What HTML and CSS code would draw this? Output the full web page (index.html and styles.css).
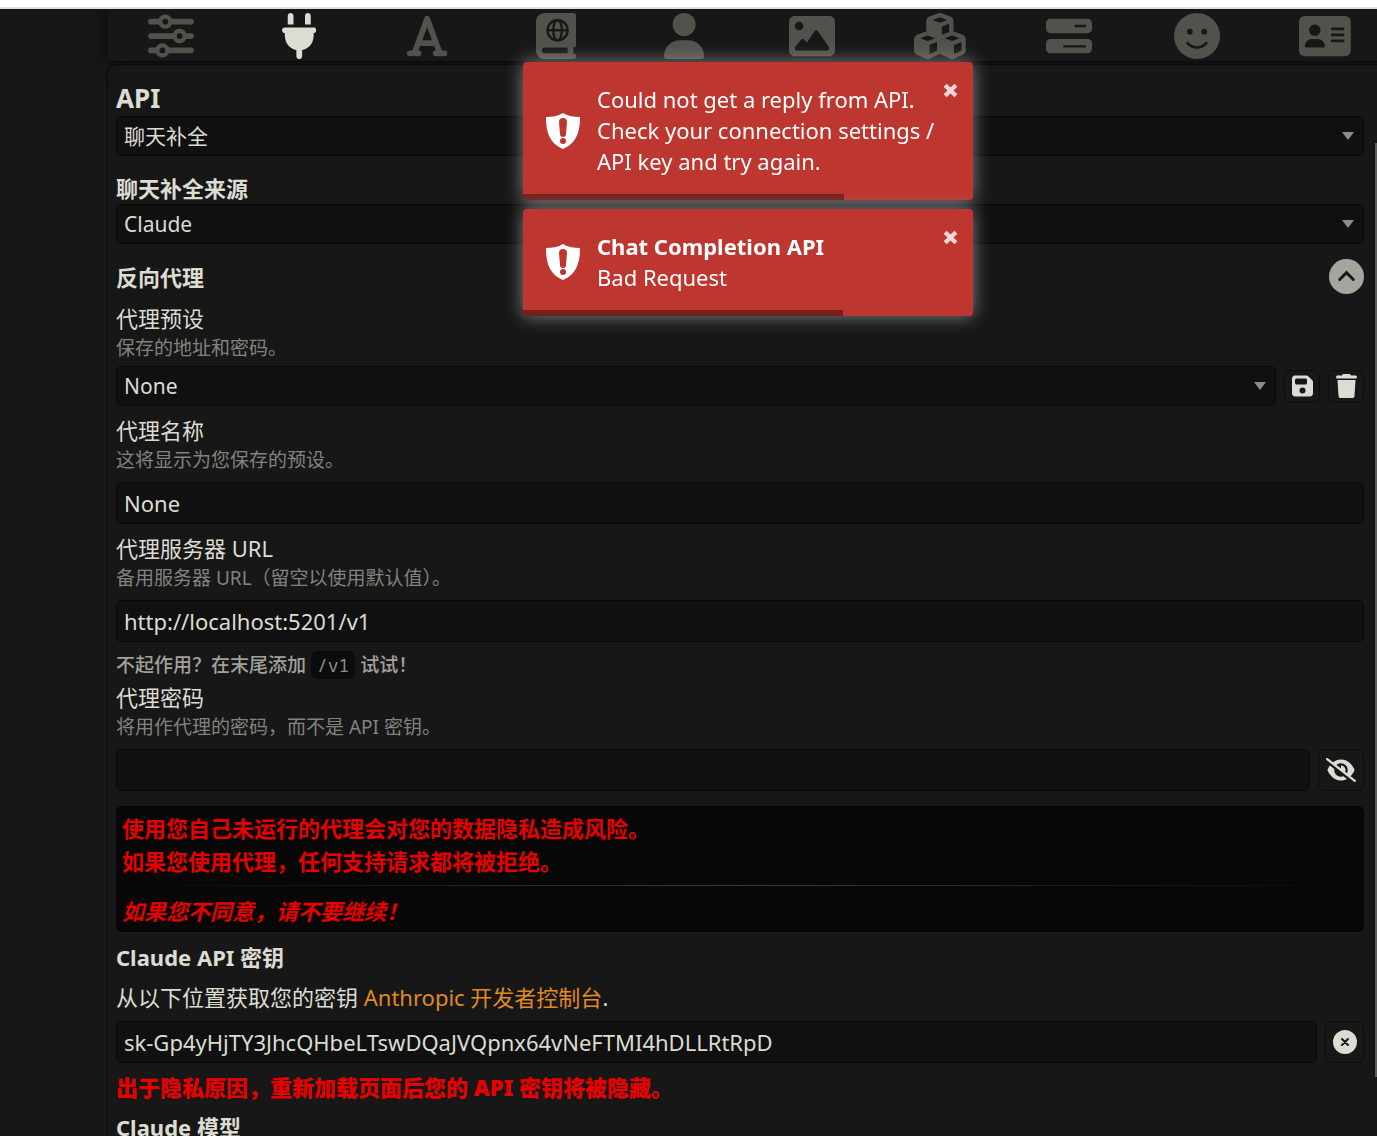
FILE: index.html
```html
<!DOCTYPE html>
<html lang="zh-CN">
<head>
    <meta charset="UTF-8">
    <title>API</title>
    <link rel="stylesheet" href="styles.css">
</head>
<body>
<div class="top-bar">
    <button class="drawer" type="button" aria-label="预设">
        <svg viewBox="0 0 512 512"><path d="M0 416c0 17.700 14.300 32 32 32l54.700 0c12.300 28.300 40.500 48 73.300 48s61-19.700 73.300-48L480 448c17.700 0 32-14.300 32-32s-14.300-32-32-32l-246.700 0c-12.300-28.300-40.500-48-73.300-48s-61 19.700-73.300 48L32 384c-17.700 0-32 14.300-32 32zm128 0a32 32 0 1 1 64 0 32 32 0 1 1 -64 0zM320 256a32 32 0 1 1 64 0 32 32 0 1 1 -64 0zm32-80c-32.800 0-61 19.700-73.300 48L32 224c-17.700 0-32 14.300-32 32s14.300 32 32 32l246.700 0c12.300 28.300 40.500 48 73.300 48s61-19.700 73.300-48l54.700 0c17.700 0 32-14.300 32-32s-14.300-32-32-32l-54.700 0c-12.300-28.300-40.500-48-73.300-48zM192 128a32 32 0 1 1 0-64 32 32 0 1 1 0 64zm73.300-64C253 35.700 224.800 16 192 16s-61 19.700-73.300 48L32 64C14.300 64 0 78.300 0 96s14.300 32 32 32l86.700 0c12.300 28.300 40.500 48 73.300 48s61-19.700 73.300-48L480 128c17.700 0 32-14.300 32-32s-14.300-32-32-32L265.300 64z"/></svg>
    </button>
    <button class="drawer current" type="button" aria-label="API 连接">
        <svg viewBox="0 0 384 512"><path d="M96 0C78.300 0 64 14.300 64 32l0 96 64 0 0-96c0-17.700-14.300-32-32-32zM288 0c-17.700 0-32 14.300-32 32l0 96 64 0 0-96c0-17.700-14.300-32-32-32zM32 160c-17.700 0-32 14.300-32 32s14.300 32 32 32l0 32c0 77.400 55 142 128 156.800l0 67.200c0 17.700 14.300 32 32 32s32-14.300 32-32l0-67.200C297 398 352 333.400 352 256l0-32c17.700 0 32-14.300 32-32s-14.300-32-32-32L32 160z"/></svg>
    </button>
    <button class="drawer" type="button" aria-label="格式">
        <svg viewBox="0 0 448 512"><g fill="none" stroke="currentColor" stroke-width="64" stroke-linecap="round" stroke-linejoin="round"><polyline points="86,440 224,64 362,440"/><line x1="140" y1="336" x2="308" y2="336"/><line x1="32" y1="448" x2="128" y2="448"/><line x1="320" y1="448" x2="416" y2="448"/></g></svg>
    </button>
    <button class="drawer" type="button" aria-label="世界书">
        <svg viewBox="0 0 448 512"><path d="M0 96C0 43 43 0 96 0L416 0c17.700 0 32 14.300 32 32l0 320c0 17.700-14.300 32-32 32l0 64c17.700 0 32 14.300 32 32s-14.300 32-32 32L96 512c-53 0-96-43-96-96L0 96zM64 416c0 17.700 14.300 32 32 32l256 0 0-64L96 384c-17.700 0-32 14.300-32 32z"/><g fill="none" stroke="#171717" stroke-width="26"><circle cx="240" cy="192" r="112"/><ellipse cx="240" cy="192" rx="48" ry="112"/><line x1="128" y1="192" x2="352" y2="192"/></g></svg>
    </button>
    <button class="drawer" type="button" aria-label="用户">
        <svg viewBox="0 0 448 512"><path d="M224 256A128 128 0 1 0 224 0a128 128 0 1 0 0 256zm-45.700 48C79.800 304 0 383.800 0 482.300C0 498.700 13.300 512 29.700 512l388.600 0c16.400 0 29.700-13.300 29.700-29.700C448 383.800 368.200 304 269.700 304l-91.400 0z"/></svg>
    </button>
    <button class="drawer" type="button" aria-label="背景">
        <svg viewBox="0 0 512 512"><path d="M0 96C0 60.700 28.700 32 64 32l384 0c35.300 0 64 28.700 64 64l0 320c0 35.300-28.700 64-64 64L64 480c-35.300 0-64-28.700-64-64L0 96zM323.800 202.500c-4.500-6.600-11.900-10.500-19.800-10.500s-15.400 3.900-19.800 10.500l-87 127.600L170.700 297c-4.600-5.700-11.500-9-18.700-9s-14.200 3.300-18.700 9l-64 80c-5.800 7.200-6.900 17.100-2.900 25.400s12.400 13.600 21.600 13.600l336 0c8.900 0 17.100-4.900 21.200-12.800s3.600-17.400-1.400-24.700l-120-176zM112 192a48 48 0 1 0 0-96 48 48 0 1 0 0 96z"/></svg>
    </button>
    <button class="drawer" type="button" aria-label="扩展">
        <svg viewBox="0 0 576 512"><path d="M290.800 48.600l78.400 29.700L288 109.500 206.800 78.300l78.400-29.700c1.800-.7 3.800-.7 5.700 0zM136 92.500l0 112.200c-1.300 .4-2.600 .8-3.900 1.300l-96 36.400C14.400 250.600 0 271.500 0 294.700L0 413.900c0 22.200 13.100 42.300 33.500 51.300l96 42.200c14.400 6.300 30.700 6.300 45.100 0L288 457.500l113.500 49.900c14.400 6.300 30.700 6.300 45.100 0l96-42.200c20.300-8.900 33.500-29.100 33.500-51.300l0-119.100c0-23.300-14.400-44.100-36.100-52.400l-96-36.400c-1.300-.5-2.600-.9-3.900-1.300l0-112.200c0-23.300-14.400-44.100-36.100-52.400l-96-36.400c-12.800-4.800-26.900-4.800-39.700 0l-96 36.400C150.400 48.400 136 69.300 136 92.500zM392 210.600l-82.400 31.200 0-89.200L392 121l0 89.600zM154.800 250.900l78.400 29.700L152 311.700 70.800 280.600l78.400-29.700c1.800-.7 3.800-.7 5.700 0zm18.800 204.400l0-100.500L256 323.200l0 95.900-82.400 36.200zM421.200 250.900c1.800-.7 3.800-.7 5.700 0l78.400 29.700L424 311.700l-81.200-31.100 78.400-29.700zM523.200 421.200l-77.600 34.100 0-100.500L528 323.200l0 90.700c0 3.200-1.900 6-4.800 7.300z"/></svg>
    </button>
    <button class="drawer" type="button" aria-label="服务器">
        <svg viewBox="0 0 512 512"><rect y="64" width="512" height="160" rx="50"/><rect y="288" width="512" height="160" rx="50"/><path fill="#171717" d="M320 132h124v26H320zM192 358h252v26H192z"/></svg>
    </button>
    <button class="drawer" type="button" aria-label="表情">
        <svg viewBox="0 0 512 512"><circle cx="256" cy="256" r="256"/><g fill="#171717"><circle cx="176" cy="208" r="32"/><circle cx="336" cy="208" r="32"/></g><path fill="none" stroke="#171717" stroke-width="30" stroke-linecap="round" d="M152 336C175 362 210 384 256 384s81-22 104-48"/></svg>
    </button>
    <button class="drawer" type="button" aria-label="角色管理">
        <svg viewBox="0 0 576 512"><rect y="32" width="576" height="448" rx="64"/><g fill="#171717"><circle cx="176" cy="192" r="64"/><path d="M64 368c0-44 36-80 80-80h64c44 0 80 36 80 80 0 9-7 16-16 16H80c-9 0-16-7-16-16z"/></g><path stroke="#171717" stroke-width="30" stroke-linecap="round" d="M368 176h124M368 243h124M368 310h124"/></svg>
    </button>
</div>

<div class="panel">
    <h3><label for="mainApi">API</label></h3>
    <select id="mainApi"><option>聊天补全</option></select>

    <h4><label for="source">聊天补全来源</label></h4>
    <select id="source"><option>Claude</option></select>

    <div class="drawer-head">
        <h4>反向代理</h4>
        <button class="toggle" type="button" aria-label="收起">
            <svg viewBox="0 0 36 36"><circle cx="18" cy="18" r="18"/><polyline points="11,21 18,14 25,21" fill="none" stroke="#171717" stroke-width="3" stroke-linecap="round"/></svg>
        </button>
    </div>

    <label class="name" for="preset">代理预设</label>
    <p class="hint">保存的地址和密码。</p>
    <div class="row">
        <select id="preset"><option>None</option></select>
        <button class="btn small" type="button" aria-label="保存">
            <svg viewBox="0 0 448 512"><path d="M64 32C28.700 32 0 60.700 0 96L0 416c0 35.300 28.700 64 64 64l320 0c35.300 0 64-28.700 64-64l0-242.700c0-17-6.700-33.300-18.700-45.300L352 50.700C340 38.700 323.700 32 306.700 32L64 32zm0 96c0-17.700 14.300-32 32-32l192 0c17.700 0 32 14.300 32 32l0 64c0 17.700-14.300 32-32 32L96 224c-17.700 0-32-14.300-32-32l0-64zM224 288a64 64 0 1 1 0 128 64 64 0 1 1 0-128z"/></svg>
        </button>
        <button class="btn small" type="button" aria-label="删除">
            <svg viewBox="0 0 448 512"><path d="M135.200 17.700L128 32 32 32C14.300 32 0 46.300 0 64S14.300 96 32 96l384 0c17.700 0 32-14.300 32-32s-14.300-32-32-32l-96 0-7.200-14.300C307.400 6.800 296.300 0 284.200 0L163.800 0c-12.100 0-23.200 6.800-28.600 17.700zM416 128L32 128 53.200 467c1.600 25.300 22.600 45 47.900 45l245.800 0c25.300 0 46.300-19.700 47.900-45L416 128z"/></svg>
        </button>
    </div>

    <label class="name" for="proxyName">代理名称</label>
    <p class="hint">这将显示为您保存的预设。</p>
    <input id="proxyName" type="text" value="None">

    <label class="name" for="proxyUrl">代理服务器 URL</label>
    <p class="hint">备用服务器 URL（留空以使用默认值）。</p>
    <input id="proxyUrl" type="text" value="http://localhost:5201/v1">
    <p class="note">不起作用？在末尾添加 <code>/v1</code> 试试！</p>

    <label class="name tight" for="proxyPass">代理密码</label>
    <p class="hint">将用作代理的密码，而不是 API 密钥。</p>
    <div class="row field">
        <input id="proxyPass" type="password">
        <button class="btn eye" type="button" aria-label="显示密码">
            <svg viewBox="0 0 640 512"><path d="M38.800 5.100C28.400-3.100 13.300-1.200 5.100 9.200S-1.200 34.700 9.200 42.900l592 464c10.400 8.200 25.500 6.300 33.700-4.100s6.300-25.500-4.100-33.700L525.600 386.700c39.600-40.600 66.400-86.100 79.900-118.400c3.300-7.900 3.300-16.700 0-24.600c-14.900-35.700-46.200-87.700-93-131.100C465.500 68.800 400.800 32 320 32c-68.200 0-125 26.300-169.300 60.800L38.800 5.100zM223.100 149.500C248.600 126.200 282.700 112 320 112c79.500 0 144 64.500 144 144c0 24.900-6.300 48.300-17.400 68.700L408 294.500c8.400-19.300 10.600-41.400 4.800-63.300c-11.100-41.500-47.800-69.400-88.600-71.100c-5.800-.2-9.200 6.100-7.400 11.700c2.100 6.400 3.300 13.200 3.300 20.300c0 10.200-2.400 19.800-6.600 28.300l-90.300-70.800zM373 389.900c-16.400 6.500-34.300 10.100-53 10.100c-79.500 0-144-64.500-144-144c0-6.900 .5-13.600 1.400-20.200L83.100 161.500C60.300 191.200 44 220.800 34.500 243.700c-3.300 7.900-3.300 16.700 0 24.600c14.900 35.700 46.200 87.700 93 131.100C174.500 443.200 239.200 480 320 480c47.800 0 89.900-12.900 126.200-32.500L373 389.900z"/></svg>
        </button>
    </div>

    <div class="warning">
        <p>使用您自己未运行的代理会对您的数据隐私造成风险。</p>
        <p>如果您使用代理，任何支持请求都将被拒绝。</p>
        <hr>
        <p><em>如果您不同意，请不要继续！</em></p>
    </div>

    <h4 class="key-title"><label for="apiKey">Claude API 密钥</label></h4>
    <p class="source">从以下位置获取您的密钥 <a href="#">Anthropic 开发者控制台</a>.</p>
    <div class="row field">
        <input id="apiKey" type="text" value="sk-Gp4yHjTY3JhcQHbeLTswDQaJVQpnx64vNeFTMI4hDLLRtRpD">
        <button class="btn clear" type="button" aria-label="清除">
            <svg viewBox="0 0 24 24"><circle cx="12" cy="12" r="12"/><path d="M9 9l6 6M15 9l-6 6" stroke="#171717" stroke-width="2" stroke-linecap="round"/></svg>
        </button>
    </div>
    <p class="privacy">出于隐私原因，重新加载页面后您的 API 密钥将被隐藏。</p>
    <h4 class="model">Claude 模型</h4>
</div>
<div class="scroll-thumb"></div>

<div class="toasts">
    <div class="toast" role="alert">
        <svg class="shield" viewBox="0 0 34 36"><path d="M17 0C12 3 6 4 0 4c0 14 3 26 17 32C31 30 34 18 34 4 28 4 22 3 17 0z"/><path fill="#bd362f" d="M17 5c3 0 4 2 4 4l-1 12c0 2-1 3-3 3s-3-1-3-3L13 9c0-2 1-4 4-4z"/><circle cx="17" cy="28" r="3" fill="#bd362f"/></svg>
        <div class="message">Could not get a reply from API. Check your connection settings / API key and try again.</div>
        <button class="close" type="button" aria-label="关闭"><svg viewBox="0 0 14 14"><path d="M2 2l10 10M12 2L2 12"/></svg></button>
        <div class="progress" style="width: 71.400%"></div>
    </div>
    <div class="toast" role="alert">
        <svg class="shield" viewBox="0 0 34 36"><path d="M17 0C12 3 6 4 0 4c0 14 3 26 17 32C31 30 34 18 34 4 28 4 22 3 17 0z"/><path fill="#bd362f" d="M17 5c3 0 4 2 4 4l-1 12c0 2-1 3-3 3s-3-1-3-3L13 9c0-2 1-4 4-4z"/><circle cx="17" cy="28" r="3" fill="#bd362f"/></svg>
        <div class="message"><strong>Chat Completion API</strong><br>Bad Request</div>
        <button class="close" type="button" aria-label="关闭"><svg viewBox="0 0 14 14"><path d="M2 2l10 10M12 2L2 12"/></svg></button>
        <div class="progress" style="width: 71%"></div>
    </div>
</div>
</body>
</html>
```
FILE: styles.css
```css
*{
    margin: 0;
    padding: 0;
    box-sizing: border-box;
}
body{
    height: 100vh;
    overflow: hidden;
    border-top: 7px solid #fff;
    background-color: #171717;
    color: #dcdcd2;
    font: 22px/32px "Noto Sans", "Noto Sans CJK SC", sans-serif;
}
svg{
    display: block;
    fill: currentColor;
}
button{
    border: none;
    background: none;
    color: inherit;
    cursor: pointer;
}
/* 顶部图标栏 */
.top-bar{
    display: flex;
    justify-content: space-between;
    height: 55px;
    margin-left: 108px;
    padding: 6px 26px 0 37px;
    background-color: #171717;
    border-bottom: 1px solid #0c0c0c;
    box-shadow: 0 0 20px rgba(0, 0, 0, 0.7);
}
body::before{
    content: "";
    display: block;
    position: relative;
    z-index: 1;
    height: 2px;
    margin-bottom: -2px;
    background-color: #dedede;
}
.drawer{
    display: flex;
    justify-content: center;
    width: 52px;
    height: 46px;
    color: #52524d;
}
.drawer svg{
    height: 46px;
}
.drawer.current{
    color: #dcdcd2;
}
/* 连接面板 */
.panel{
    position: relative;
    margin: 2px 0 0 107px;
    padding: 15px 13px 0 8px;
    border-top: 1px solid #0a0a0a;
    border-left: 1px solid #0a0a0a;
    border-radius: 10px 0 0 0;
    background-color: #171717;
}
h3{
    font-size: 26px;
    line-height: 36px;
}
h4{
    margin-top: 16px;
    font-size: 22px;
}
select, input{
    display: block;
    width: 100%;
    min-width: 0;
    padding: 0 7px;
    border: 1px solid #080808;
    border-radius: 6px;
    background-color: #101010;
    color: #dcdcd2;
    font-family: inherit;
    outline: none;
}
select{
    height: 40px;
    font-size: 21px;
    appearance: none;
    background-image: url("data:image/svg+xml,%3Csvg xmlns='http://www.w3.org/2000/svg' viewBox='0 0 12 8'%3E%3Cpath d='M0 0h12L6 8z' fill='%238c8c8c'/%3E%3C/svg%3E");
    background-repeat: no-repeat;
    background-position: right 9px center;
    background-size: 12px 8px;
}
input{
    height: 42px;
    margin-top: 7px;
    font-size: 22px;
}
.drawer-head{
    display: flex;
    align-items: center;
    justify-content: space-between;
    margin-top: 15px;
}
.drawer-head h4{
    margin-top: 0;
}
.toggle{
    color: #a5a59d;
}
.toggle svg{
    width: 35px;
    height: 35px;
}
.name{
    display: block;
    margin-top: 8px;
}
.name.tight{
    margin-top: 0;
}
.hint{
    color: #83837d;
    font-size: 19px;
    line-height: 29px;
}
.row{
    display: flex;
    align-items: center;
    gap: 8px;
    margin-top: 3px;
}
.row.field{
    margin-top: 7px;
}
.field input{
    margin-top: 0;
}
.btn{
    display: flex;
    flex: none;
    align-items: center;
    justify-content: center;
    height: 42px;
    border: 1px solid #0c0c0c;
    border-radius: 6px;
}
.btn.small{
    width: 36px;
    height: 33px;
}
.btn.small svg{
    height: 24px;
}
.btn.eye{
    width: 46px;
}
.btn.eye svg{
    width: 30px;
}
.btn.clear{
    width: 39px;
}
.btn.clear svg{
    width: 24px;
}
.note{
    margin-top: 8px;
    color: #a1a19a;
    font-size: 19px;
    font-weight: 500;
    line-height: 31px;
}
.note code{
    padding: 2px 6px;
    border-radius: 6px;
    background-color: #0b0b0b;
    color: #8e8e88;
    font: 18px/24px "Noto Sans Mono", "DejaVu Sans Mono", monospace;
}
.warning{
    margin-top: 15px;
    padding: 5px 5px 3px;
    border: 1px solid #030303;
    border-radius: 6px;
    background-color: #070707;
    color: #e60000;
    font-weight: bold;
    line-height: 33px;
}
.warning hr{
    height: 1px;
    margin: 7px 0 9px;
    border: none;
    background-image: linear-gradient(90deg, transparent, #3a3a38, transparent);
}
.key-title{
    margin-top: 9px;
}
.source{
    margin-top: 8px;
    line-height: 33px;
}
.source a{
    color: #e18a24;
    text-decoration: none;
}
.privacy{
    margin-top: 8px;
    color: #e60000;
    font-weight: 900;
}
.model{
    margin-top: 8px;
}
.scroll-thumb{
    position: absolute;
    top: 143px;
    right: 0;
    bottom: 59px;
    width: 2px;
    background-color: #5c5c5c;
}
/* 错误提示 */
.toasts{
    position: fixed;
    top: 62px;
    left: 119px;
    right: 0;
    display: flex;
    flex-direction: column;
    align-items: center;
    gap: 9px;
    pointer-events: none;
}
.toast{
    position: relative;
    display: flex;
    align-items: center;
    gap: 17px;
    width: 450px;
    padding: 22px 22px 23px 23px;
    border-radius: 4px;
    background-color: #bd362f;
    box-shadow: 0 0 18px rgba(160, 160, 160, 0.8);
    color: #fff;
    line-height: 31px;
    overflow: hidden;
    pointer-events: auto;
}
.shield{
    flex: none;
    width: 34px;
    height: 36px;
}
.close{
    position: absolute;
    top: 21px;
    right: 15px;
    opacity: 0.8;
}
.close svg{
    width: 15px;
    height: 15px;
    stroke: #fff;
    stroke-width: 4;
}
.progress{
    position: absolute;
    left: 0;
    bottom: 0;
    height: 6px;
    background-color: #731f1b;
}
```
